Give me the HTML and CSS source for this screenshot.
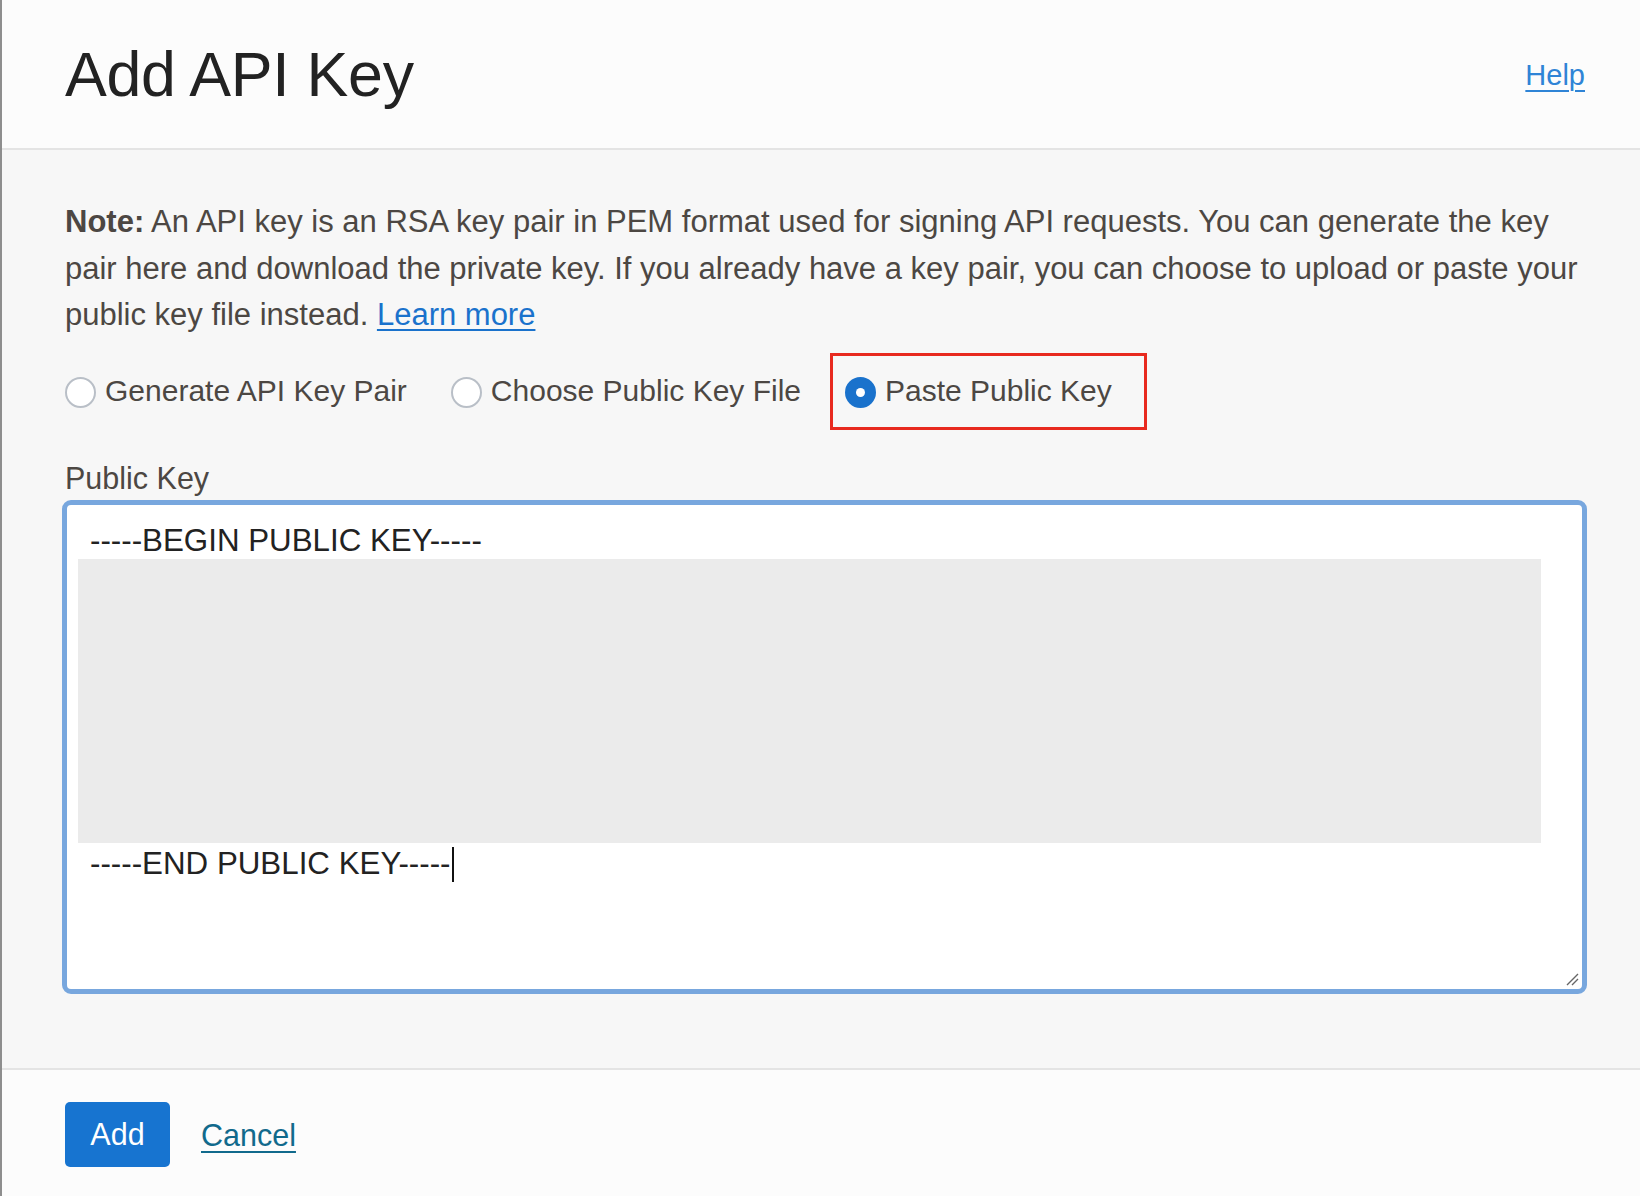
FILE: index.html
```html
<!DOCTYPE html>
<html lang="en">
<head>
<meta charset="utf-8">
<title>Add API Key</title>
<link rel="stylesheet" href="styles.css">
</head>
<body>
<div class="panel">
  <header class="panel-header">
    <h1 class="panel-title">Add API Key</h1>
    <a class="help-link" href="#">Help</a>
  </header>
  <main class="panel-body">
    <p class="note"><strong>Note:</strong> An API key is an RSA key pair in PEM format used for signing API requests. You can generate the key pair here and download the private key. If you already have a key pair, you can choose to upload or paste your public key file instead. <a class="learn-link" href="#">Learn more</a></p>
    <div class="radio-group">
      <label class="radio-option"><span class="radio"></span><span class="radio-text">Generate API Key Pair</span></label>
      <label class="radio-option"><span class="radio"></span><span class="radio-text">Choose Public Key File</span></label>
      <label class="radio-option highlighted"><span class="radio checked"></span><span class="radio-text">Paste Public Key</span></label>
    </div>
    <div class="field-label">Public Key</div>
    <div class="key-area">
      <div class="key-line">-----BEGIN PUBLIC KEY-----</div>
      <div class="key-redacted"></div>
      <div class="key-line key-line-end">-----END PUBLIC KEY-----<span class="caret"></span></div>
      <svg class="resize-grip" width="14" height="14" viewBox="0 0 14 14"><path d="M2 13 L13 2 M7 13 L13 7" stroke="#666" stroke-width="1.4" fill="none"/></svg>
    </div>
  </main>
  <footer class="panel-footer">
    <button class="btn-primary" type="button">Add</button>
    <a class="cancel-link" href="#">Cancel</a>
  </footer>
</div>
</body>
</html>
```

FILE: styles.css
```css
html, body {
  margin: 0;
  padding: 0;
}
body {
  width: 1640px;
  height: 1196px;
  overflow: hidden;
  font-family: "Liberation Sans", Arial, Helvetica, sans-serif;
  background: #f7f7f7;
}
.panel {
  height: 1196px;
  display: flex;
  flex-direction: column;
  border-left: 2px solid #8e8e8e;
  box-shadow: inset 1px 0 0 #c9c9c9;
  box-sizing: border-box;
}
.panel-header {
  height: 148px;
  flex: none;
  background: #fcfcfc;
  border-bottom: 2px solid #e4e4e4;
  display: flex;
  align-items: center;
  justify-content: space-between;
  padding: 0 55px 0 63px;
}
.panel-title {
  margin: 0;
  font-size: 62.7px;
  font-weight: normal;
  color: #222222;
  letter-spacing: -0.3px;
  padding-bottom: 1px;
}
.help-link {
  font-size: 29px;
  color: #2f84d6;
  text-decoration: underline;
  text-underline-offset: 5px;
  text-decoration-thickness: 2px;
  padding-top: 3px;
}
.panel-body {
  flex: 1;
  background: #f7f7f7;
  padding: 49px 48px 0 63px;
  border-bottom: 2px solid #e4e4e4;
}
.note {
  margin: 0;
  font-size: 31px;
  line-height: 46.5px;
  color: #4c4743;
}
.note strong {
  font-weight: bold;
}
.learn-link {
  color: #1a72cc;
  text-decoration: underline;
  text-decoration-thickness: 2px;
  text-underline-offset: 4px;
}
.radio-group {
  display: flex;
  align-items: center;
  gap: 44px;
  margin-top: 13px;
  height: 78px;
}
.radio-option {
  display: flex;
  align-items: center;
  gap: 9px;
  font-size: 30px;
  color: #4c4743;
  position: relative;
}
.radio {
  width: 27px;
  height: 27px;
  border: 2px solid #b9bfc7;
  border-radius: 50%;
  background: #ffffff;
  flex: none;
  box-sizing: content-box;
  margin-top: 4px;
  position: relative;
}
.radio.checked {
  background: #1a72cc;
  border-color: #1a72cc;
}
.radio.checked::after {
  content: "";
  position: absolute;
  left: 50%;
  top: 50%;
  width: 9px;
  height: 9px;
  margin: -4.5px 0 0 -4.5px;
  border-radius: 50%;
  background: #ffffff;
}
.highlighted::after {
  content: "";
  position: absolute;
  left: -15px;
  right: -35px;
  top: -20px;
  bottom: -22px;
  border: 3px solid #e82a1f;
}
.field-label {
  margin-top: 30px;
  font-size: 30.5px;
  line-height: 36px;
  color: #4c4743;
}
.key-area {
  position: relative;
  margin-top: 4px;
  margin-left: -3px;
  width: 1525px;
  height: 494px;
  box-sizing: border-box;
  border: 5px solid #78a7de;
  border-radius: 9px;
  background: #ffffff;
  padding: 18px 41px 0 11px;
}
.key-line {
  font-size: 31.3px;
  line-height: 36px;
  color: #222222;
  padding-left: 12px;
  white-space: nowrap;
}
.key-line-end {
  padding-top: 3px;
}
.key-redacted {
  height: 284px;
  background: #ebebeb;
}
.caret {
  display: inline-block;
  width: 2px;
  height: 35px;
  background: #111111;
  vertical-align: -8px;
  margin-left: 1px;
}
.resize-grip {
  position: absolute;
  right: 3px;
  bottom: 3px;
}
.panel-footer {
  height: 126px;
  flex: none;
  background: #fcfcfc;
  display: flex;
  align-items: center;
  gap: 31px;
  padding: 0 0 0 63px;
}
.btn-primary {
  width: 105px;
  height: 65px;
  border: none;
  border-radius: 5px;
  background: #1774d0;
  color: #ffffff;
  font-family: "Liberation Sans", Arial, Helvetica, sans-serif;
  font-size: 30.5px;
  padding: 0;
  margin-top: 2px;
}
.cancel-link {
  font-size: 30.5px;
  color: #116a8c;
  text-decoration: underline;
  text-decoration-thickness: 2px;
  text-underline-offset: 5px;
  margin-top: 4px;
}
```
